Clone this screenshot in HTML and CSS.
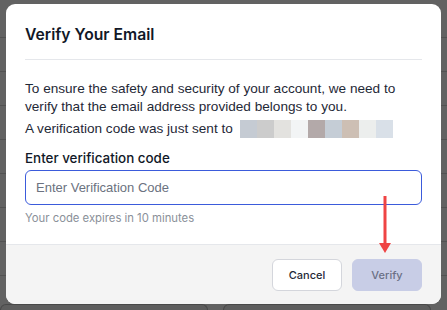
FILE: index.html
```html
<!DOCTYPE html>
<html>
<head>
<meta charset="utf-8">
<link rel="stylesheet" href="styles.css">
</head>
<body>
<div class="page">
  <div class="rows">
    <div class="row"></div>
    <div class="row"></div>
    <div class="row"></div>
    <div class="row"></div>
    <div class="row"></div>
    <div class="row"></div>
    <div class="row"></div>
    <div class="row"></div>
  </div>
  <div class="bottom-cards">
    <div class="card"></div>
    <div class="card"></div>
  </div>
</div>
<div class="overlay">
  <div class="modal">
    <div class="modal-header">
      <h2 class="title">Verify Your Email</h2>
    </div>
    <div class="modal-body">
      <p class="intro">To ensure the safety and security of your account, we need to verify that the email address provided belongs to you.</p>
      <div class="sent">A verification code was just sent to <span class="redacted"><span class="px c1"></span><span class="px c2"></span><span class="px c3"></span><span class="px c4"></span><span class="px c5"></span><span class="px c6"></span><span class="px c7"></span><span class="px c8"></span><span class="px c9"></span></span></div>
      <label class="label" for="code">Enter verification code</label>
      <input class="input" id="code" type="text" placeholder="Enter Verification Code">
      <div class="hint">Your code expires in 10 minutes</div>
    </div>
    <div class="modal-footer">
      <button class="btn btn-cancel">Cancel</button>
      <button class="btn btn-verify">Verify</button>
    </div>
    <svg class="arrow" width="14" height="58" viewBox="0 0 14 58">
      <line x1="7" y1="0" x2="7" y2="48" stroke="#ef4444" stroke-width="3"/>
      <polygon points="1,47 13,47 7,57" fill="#ef4444"/>
    </svg>
  </div>
</div>
</body>
</html>
```

FILE: styles.css
```css
* { box-sizing: border-box; }
html, body { margin: 0; padding: 0; }
body {
  width: 447px;
  height: 310px;
  overflow: hidden;
  position: relative;
  background: #6a6a6a;
  font-family: Inter, "Noto Sans", sans-serif;
}
.page {
  height: 310px;
  display: flex;
  flex-direction: column;
}
.rows {
  padding-top: 4px;
  display: flex;
  flex-direction: column;
}
.row {
  height: 34px;
  border-bottom: 1px solid #585858;
}
.bottom-cards {
  margin-top: auto;
  display: flex;
  gap: 15px;
  height: 6px;
}
.card {
  flex: 0 0 208px;
  border: 1px solid #4e4e4e;
  border-bottom: none;
  border-radius: 6px 6px 0 0;
  background: #666;
}
.overlay {
  position: absolute;
  inset: 0;
  background: rgba(40, 40, 40, 0.12);
}
.modal {
  position: absolute;
  left: 6px;
  top: 4px;
  width: 435px;
  height: 300px;
  background: #fff;
  border-radius: 9px;
  overflow: hidden;
  display: flex;
  flex-direction: column;
}
.modal-header {
  padding: 19px 19px 0;
}
.title {
  margin: 0;
  font-size: 15.7px;
  line-height: 24px;
  font-weight: 600;
  color: #111827;
  padding-bottom: 12px;
  border-bottom: 1px solid #e5e7eb;
}
.modal-body {
  padding: 20px 19px 0;
  flex: 1;
}
.intro {
  margin: 0;
  font-family: "Liberation Sans", Arial, sans-serif;
  font-size: 13.6px;
  line-height: 18px;
  color: #1f2937;
}
.sent {
  margin-top: 3px;
  height: 18px;
  display: flex;
  align-items: center;
  font-family: "Liberation Sans", Arial, sans-serif;
  font-size: 13.6px;
  color: #1f2937;
  white-space: pre;
}
.redacted {
  display: flex;
  height: 18px;
  margin-left: 3px;
  margin-top: 2px;
}
.px { width: 17px; height: 18px; display: block; }
.c1 { background: #c5cbd3; }
.c2 { background: #cccccc; }
.c3 { background: #e3e2df; }
.c4 { background: #f2f4f5; }
.c5 { background: #b3a9a9; }
.c6 { background: #c5cdd6; }
.c7 { background: #cdbfb4; }
.c8 { background: #eceeed; }
.c9 { background: #d9e0e8; }
.label {
  display: block;
  margin-top: 12px;
  font-size: 13.4px;
  line-height: 18px;
  font-weight: 500;
  color: #111827;
}
.input {
  display: block;
  width: 100%;
  margin-top: 3px;
  height: 35px;
  border: 1px solid #3b5bdb;
  border-radius: 6px;
  padding: 0 10px;
  font-family: "Liberation Sans", Arial, sans-serif;
  font-size: 13px;
  color: #111827;
  outline: none;
}
.input::placeholder { color: #6b7280; }
.hint {
  margin-top: 5px;
  font-size: 11.3px;
  line-height: 16px;
  color: #8a9099;
}
.modal-footer {
  height: 60px;
  background: #f4f4f4;
  border-top: 1px solid #e5e7eb;
  display: flex;
  justify-content: flex-end;
  align-items: center;
  gap: 10px;
  padding: 0 19px;
}
.btn {
  height: 32px;
  border-radius: 6px;
  font-family: inherit;
  font-size: 11px;
  font-weight: 500;
  padding: 0;
}
.btn-cancel {
  width: 70px;
  background: #fff;
  border: 1px solid #d4d6dc;
  color: #1f2937;
}
.btn-verify {
  width: 70px;
  background: #c8cde6;
  border: 1px solid #c8cde6;
  color: #6b7085;
}
.arrow {
  position: absolute;
  left: 372px;
  top: 192px;
}
```
